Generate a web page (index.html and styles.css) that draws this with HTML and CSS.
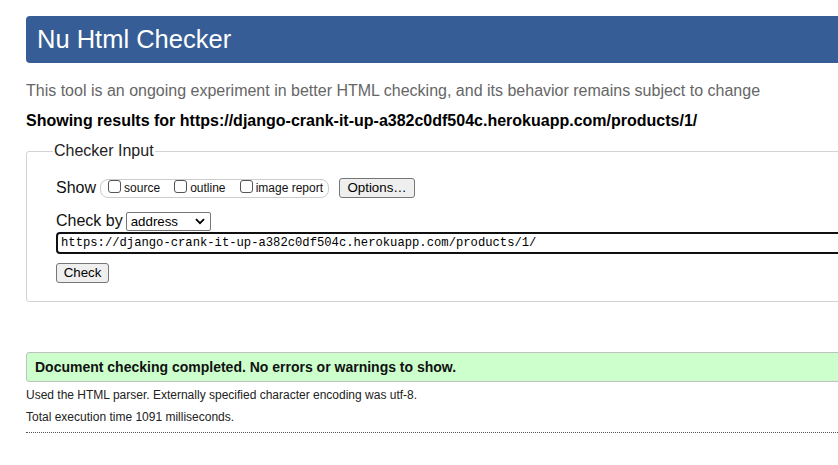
FILE: index.html
```html
<!DOCTYPE html>
<html lang="en">
<head>
<meta charset="utf-8">
<title>Showing results for https://django-crank-it-up-a382c0df504c.herokuapp.com/products/1/ - Nu Html Checker</title>
<link rel="stylesheet" href="styles.css">
</head>
<body>
<div class="page">
  <h1 class="banner">Nu Html Checker</h1>
  <p class="intro">This tool is an ongoing experiment in better HTML checking, and its behavior remains subject to change</p>
  <p class="showing">Showing results for https://django-crank-it-up-a382c0df504c.herokuapp.com/products/1/</p>
  <fieldset class="checker">
    <legend class="legend">Checker Input</legend>
    <div class="row show-row">
      <span class="lbl">Show</span>
      <span class="opts">
        <label class="opt"><span class="cb"></span>source</label>
        <label class="opt"><span class="cb"></span>outline</label>
        <label class="opt"><span class="cb"></span>image report</label>
      </span>
      <button class="btn opt-btn" type="button">Options…</button>
    </div>
    <div class="row by-row">
      <span class="lbl">Check by</span>
      <span class="select">address<svg class="chev" width="10" height="7" viewBox="0 0 10 7"><path d="M1 1.2 L5 5.2 L9 1.2" fill="none" stroke="#000" stroke-width="1.8"/></svg></span>
    </div>
    <div class="url">https://django-crank-it-up-a382c0df504c.herokuapp.com/products/1/</div>
    <button class="btn check-btn" type="button">Check</button>
  </fieldset>
  <p class="success">Document checking completed. No errors or warnings to show.</p>
  <p class="details">Used the HTML parser. Externally specified character encoding was utf-8.</p>
  <p class="details details-2">Total execution time 1091 milliseconds.</p>
  <hr class="rule">
</div>
</body>
</html>
```
FILE: styles.css
```css
html, body {
  margin: 0;
  padding: 0;
  background: #fff;
  overflow: hidden;
}
body {
  font-family: "Liberation Sans", Arial, sans-serif;
  color: #000;
}
.page {
  margin-left: 26px;
  padding-top: 16px;
  width: 900px;
}
.banner {
  margin: 0;
  height: 47px;
  box-sizing: border-box;
  background: #365d95;
  color: #fff;
  border-radius: 4px;
  font-weight: normal;
  font-size: 25.5px;
  line-height: 47px;
  padding-left: 11px;
}
.intro {
  margin: 18px 0 0;
  font-size: 16px;
  line-height: 20px;
  color: #666;
}
.showing {
  margin: 10px 0 0;
  font-size: 16px;
  line-height: 20px;
  font-weight: bold;
}
.checker {
  margin: 11px 0 0;
  padding: 17px 0 18px 29px;
  border: 1px solid #d3d3d3;
  border-radius: 3px;
  min-width: 0;
}
.legend {
  padding: 0 1px;
  font-size: 16px;
  line-height: 18px;
  color: #222;
  margin-left: -3px;
}
.row {
  display: flex;
  align-items: center;
}
.lbl {
  font-size: 16px;
  color: #111;
}
.show-row {
  height: 22px;
}
.opts {
  display: flex;
  align-items: center;
  margin-left: 4px;
  height: 19px;
  border: 1px solid #ccc;
  border-radius: 8px;
  padding: 0 5px 0 7px;
  width: 229px;
  box-sizing: border-box;
  justify-content: space-between;
}
.opt {
  display: flex;
  align-items: center;
  font-size: 12px;
  color: #111;
}
.cb {
  width: 13px;
  height: 13px;
  border: 1px solid #555;
  border-radius: 3px;
  margin-right: 3px;
  box-sizing: border-box;
  position: relative;
  top: -2px;
}
.btn {
  font-family: "Liberation Sans", Arial, sans-serif;
  font-size: 13.3px;
  color: #000;
  background: #efefef;
  border: 1px solid #767676;
  border-radius: 3px;
  padding: 0 6px;
  height: 20px;
  line-height: 18px;
}
.opt-btn {
  margin-left: 10px;
  width: 76px;
}
.by-row {
  margin-top: 12px;
  height: 20px;
}
.select {
  display: inline-flex;
  align-items: center;
  justify-content: space-between;
  margin-left: 3px;
  width: 85px;
  height: 19px;
  box-sizing: border-box;
  border: 1px solid #767676;
  border-radius: 2px;
  padding: 0 5px 0 4px;
  font-size: 13.3px;
}
.url {
  margin-top: 1px;
  height: 22px;
  box-sizing: border-box;
  border: 2px solid #101010;
  border-radius: 4px;
  font-family: "Liberation Mono", "Courier New", monospace;
  font-size: 12.2px;
  line-height: 18px;
  padding-left: 3px;
  margin-right: -20px;
}
.check-btn {
  margin-top: 9px;
  width: 53px;
}
.success {
  margin: 50px 0 0;
  height: 30px;
  box-sizing: border-box;
  background: #ccffcc;
  border: 1px solid #c0c0c0;
  border-radius: 3px;
  font-size: 14px;
  font-weight: bold;
  line-height: 28px;
  padding-left: 8px;
  color: #111;
}
.details {
  margin: 6px 0 0;
  font-size: 12px;
  line-height: 15px;
  color: #222;
}
.details-2 {
  margin-top: 7px;
}
.rule {
  margin: 7px 0 0;
  border: 0;
  border-top: 1px dotted #555;
  height: 0;
}
```
